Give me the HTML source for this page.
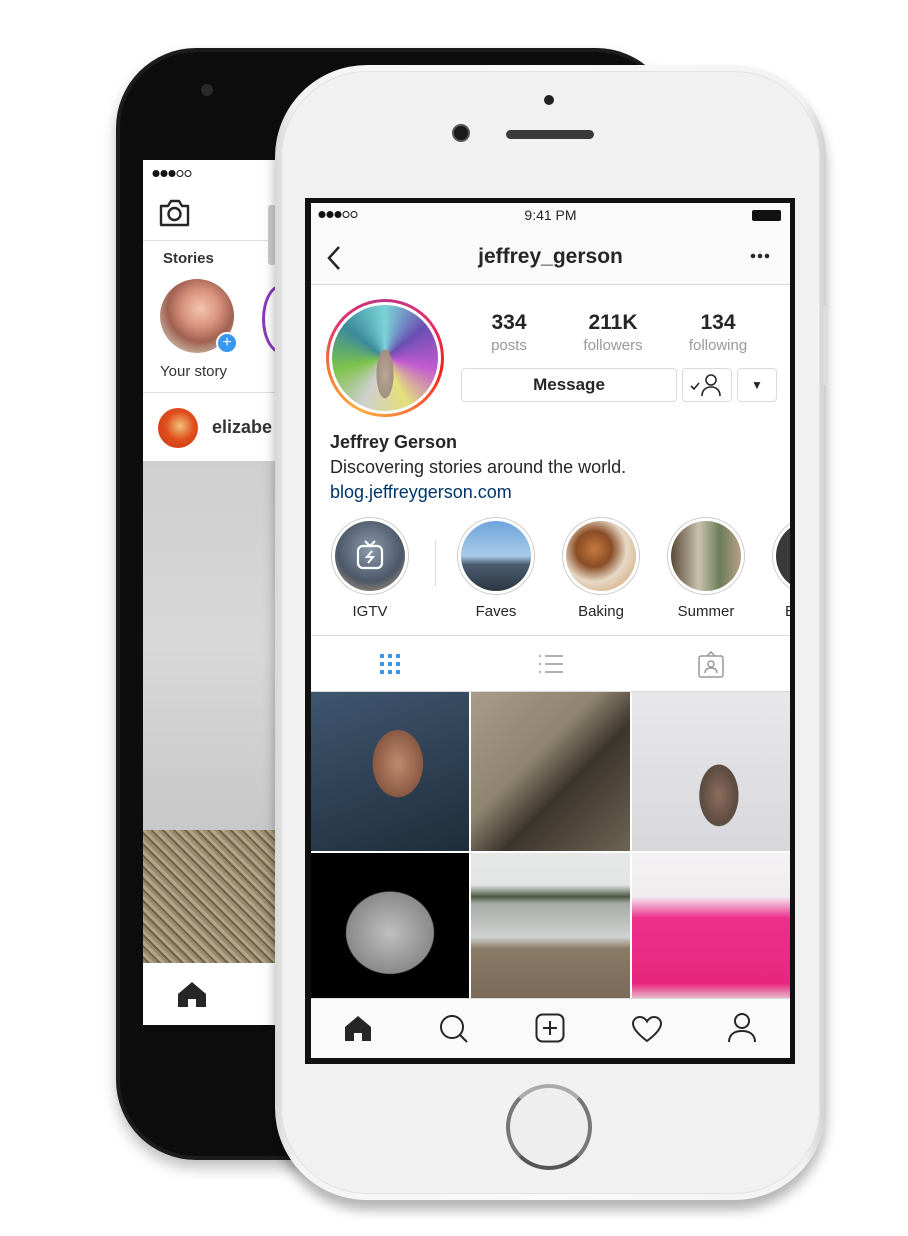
<!DOCTYPE html>
<html><head><meta charset="utf-8"><style>
*{margin:0;padding:0;box-sizing:border-box}
body{width:908px;height:1236px;background:#fff;position:relative;overflow:hidden;font-family:"Liberation Sans",Arial,sans-serif;color:#262626}
.a{position:absolute}
.t{position:absolute;white-space:nowrap}
</style></head><body>
<!-- back phone -->
<div class="a" style="left:116px;top:48px;width:560px;height:1112px;background:#1c1c1c;border-radius:80px;box-shadow:0 8px 14px rgba(0,0,0,.25)"></div>
<div class="a" style="left:120px;top:52px;width:552px;height:1104px;background:#0d0d0d;border-radius:76px"></div>
<div class="a" style="left:201px;top:84px;width:12px;height:12px;border-radius:50%;background:#2a2a2a"></div>
<div class="a" style="left:143px;top:160px;width:140px;height:865px;background:#fff"></div>
<svg class="a" style="left:152px;top:169px" width="46" height="9"><circle cx="4" cy="4.5" r="3.5" fill="#111"/><circle cx="12" cy="4.5" r="3.5" fill="#111"/><circle cx="20" cy="4.5" r="3.5" fill="#111"/><circle cx="28" cy="4.5" r="3" fill="none" stroke="#111"/><circle cx="36" cy="4.5" r="3" fill="none" stroke="#111"/></svg>
<svg class="a" style="left:158px;top:198px" width="33" height="30" viewBox="0 0 33 30"><path d="M3 8h7l3-5h8l3 5h6v19H3z" fill="none" stroke="#262626" stroke-width="2.4" stroke-linejoin="round"/><circle cx="16.5" cy="16" r="6" fill="none" stroke="#262626" stroke-width="2.4"/></svg>
<div class="a" style="left:143px;top:240px;width:140px;height:1px;background:#ddd"></div>
<div class="t" style="left:163px;top:250px;font-size:15px;font-weight:bold;color:#333">Stories</div>
<div class="a" style="left:160px;top:279px;width:74px;height:74px;border-radius:50%;background:radial-gradient(circle at 55% 40%,#f3c4b0 0,#d9947e 30%,#a06050 55%,#c9b8a6 80%)"></div>
<div class="a" style="left:216px;top:332px;width:22px;height:22px;border-radius:50%;background:#3897f0;border:2px solid #fff;color:#fff;font-size:16px;line-height:17px;text-align:center">+</div>
<div class="a" style="left:262px;top:284px;width:40px;height:70px;border-radius:50%;border:3px solid #8a3ab9"></div>
<div class="t" style="left:160px;top:363px;font-size:15px;color:#333">Your story</div>
<div class="a" style="left:143px;top:392px;width:140px;height:1px;background:#ddd"></div>
<div class="a" style="left:158px;top:408px;width:40px;height:40px;border-radius:50%;background:radial-gradient(circle at 55% 45%,#f1c27a 0,#e0501e 45%,#c7320f 100%)"></div>
<div class="t" style="left:212px;top:417px;font-size:18px;font-weight:bold;color:#333">elizabe</div>
<div class="a" style="left:143px;top:461px;width:140px;height:370px;background:linear-gradient(180deg,#cfcfcf,#d8d8d8 50%,#c8c8c8)"></div>
<div class="a" style="left:143px;top:830px;width:140px;height:133px;background:repeating-linear-gradient(45deg,#9a8b6e 0 3px,#6e624d 3px 5px,#b3a588 5px 8px)"></div>
<svg class="a" style="left:176px;top:980px" width="32" height="28" viewBox="0 0 32 28"><path d="M16 2L2 14v13h10v-8h8v8h10V14z" fill="#262626"/></svg>
<div class="a" style="left:268px;top:205px;width:8px;height:60px;background:#ccc;border-radius:3px"></div>
<!-- front phone -->
<div class="a" style="left:275px;top:65px;width:551px;height:1135px;border-radius:92px;background:linear-gradient(90deg,#d8d8d8,#f4f4f4 4%,#fafafa 50%,#f2f2f2 96%,#d0d0d0);box-shadow:0 10px 12px rgba(0,0,0,.3)"></div>
<div class="a" style="left:281px;top:71px;width:539px;height:1123px;border-radius:86px;background:#f1f1f1;border:1px solid #e2e2e2"></div>
<div class="a" style="left:544px;top:95px;width:10px;height:10px;border-radius:50%;background:#222"></div>
<div class="a" style="left:452px;top:124px;width:18px;height:18px;border-radius:50%;background:#1a1a1a;border:2px solid #555"></div>
<div class="a" style="left:506px;top:130px;width:88px;height:9px;border-radius:5px;background:#3a3a3a"></div>
<div class="a" style="left:506px;top:1084px;width:86px;height:86px;border-radius:50%;border:4px solid #777;border-top-color:#aaa;border-bottom-color:#555;background:#eee"></div>
<div class="a" style="left:305px;top:198px;width:490px;height:866px;background:#111"></div>
<div class="a" style="left:311px;top:203px;width:479px;height:855px;background:#fff;overflow:hidden">
 <div class="a" style="left:0;top:0;width:479px;height:82px;background:#fafafa;border-bottom:1px solid #dbdbdb"></div>
 <svg class="a" style="left:7px;top:7px" width="46" height="9"><circle cx="4" cy="4.5" r="3.5" fill="#111"/><circle cx="12" cy="4.5" r="3.5" fill="#111"/><circle cx="20" cy="4.5" r="3.5" fill="#111"/><circle cx="28" cy="4.5" r="3" fill="none" stroke="#111"/><circle cx="36" cy="4.5" r="3" fill="none" stroke="#111"/></svg>
 <div class="t" style="left:0;width:479px;text-align:center;top:4px;font-size:14px">9:41 PM</div>
 <div class="a" style="left:441px;top:7px;width:29px;height:11px;background:#111;border-radius:2px"></div>
 <svg class="a" style="left:15px;top:42px" width="18" height="26"><path d="M13 2L3 13l10 11" fill="none" stroke="#262626" stroke-width="2.5"/></svg>
 <div class="t" style="left:0;width:479px;text-align:center;top:42px;font-size:21px;font-weight:bold">jeffrey_gerson</div>
 <svg class="a" style="left:439px;top:50px" width="20" height="6"><circle cx="3" cy="3" r="2.3" fill="#262626"/><circle cx="10" cy="3" r="2.3" fill="#262626"/><circle cx="17" cy="3" r="2.3" fill="#262626"/></svg>
 <div class="a" style="left:15px;top:96px;width:118px;height:118px;border-radius:50%;background:conic-gradient(#c13584,#e1306c,#fd1d1d,#f77737,#fcaf45,#f77737,#e1306c,#c13584)"></div>
 <div class="a" style="left:18px;top:99px;width:112px;height:112px;border-radius:50%;background:#fff"></div>
 <div class="a" style="left:21px;top:102px;width:106px;height:106px;border-radius:50%;background:radial-gradient(ellipse 14px 40px at 50% 65%,#b8a596 0,#a38f80 60%,transparent 62%),conic-gradient(#7ad4d6,#6a4fb3,#c25bd0,#e4e07a,#cfcfcf,#7dc24a,#3c8a9c,#7ad4d6)"></div>
 <div class="t" style="left:148px;width:100px;text-align:center;top:108px;font-size:21px;font-weight:bold">334</div>
 <div class="t" style="left:148px;width:100px;text-align:center;top:134px;font-size:15px;color:#999">posts</div>
 <div class="t" style="left:252px;width:100px;text-align:center;top:108px;font-size:21px;font-weight:bold">211K</div>
 <div class="t" style="left:252px;width:100px;text-align:center;top:134px;font-size:15px;color:#999">followers</div>
 <div class="t" style="left:357px;width:100px;text-align:center;top:108px;font-size:21px;font-weight:bold">134</div>
 <div class="t" style="left:357px;width:100px;text-align:center;top:134px;font-size:15px;color:#999">following</div>
 <div class="a" style="left:150px;top:165px;width:216px;height:34px;border:1px solid #dbdbdb;border-radius:4px;text-align:center;font-size:17px;line-height:32px;font-weight:bold;color:#262626">Message</div>
 <div class="a" style="left:371px;top:165px;width:50px;height:34px;border:1px solid #dbdbdb;border-radius:4px"></div>
 <svg class="a" style="left:378px;top:169px" width="36" height="26"><path d="M2 14l3 3 5-6" fill="none" stroke="#262626" stroke-width="1.6"/><circle cx="22" cy="8" r="5" fill="none" stroke="#262626" stroke-width="1.6"/><path d="M13 24c0-6 4-9 9-9s9 3 9 9" fill="none" stroke="#262626" stroke-width="1.6"/></svg>
 <div class="a" style="left:426px;top:165px;width:40px;height:34px;border:1px solid #dbdbdb;border-radius:4px;text-align:center;font-size:12px;line-height:32px">▼</div>
 <div class="t" style="left:19px;top:229px;font-size:18px;font-weight:bold">Jeffrey Gerson</div>
 <div class="t" style="left:19px;top:254px;font-size:18px">Discovering stories around the world.</div>
 <div class="t" style="left:19px;top:279px;font-size:18px;color:#003569">blog.jeffreygerson.com</div>
 <!-- highlights -->
 <div class="a" style="left:20px;top:314px;width:78px;height:78px;border-radius:50%;border:1px solid #ccc"></div>
 <div class="a" style="left:24px;top:318px;width:70px;height:70px;border-radius:50%;background:radial-gradient(circle at 50% 40%,#8a9aac,#4c5868 60%,#c9a880 100%)"></div>
 <svg class="a" style="left:44px;top:336px" width="30" height="32"><path d="M10 2l5 5 5-5" fill="none" stroke="#fff" stroke-width="2"/><rect x="3" y="7" width="24" height="22" rx="5" fill="none" stroke="#fff" stroke-width="2.2"/><path d="M17 12l-5 6h6l-5 6" fill="none" stroke="#fff" stroke-width="2"/></svg>
 <div class="a" style="left:124px;top:338px;width:1px;height:45px;background:#dbdbdb"></div>
 <div class="a" style="left:146px;top:314px;width:78px;height:78px;border-radius:50%;border:1px solid #ccc"></div>
 <div class="a" style="left:150px;top:318px;width:70px;height:70px;border-radius:50%;background:linear-gradient(180deg,#6fa4dc 0,#a7cbe8 50%,#4c5c70 62%,#2a3642 100%)"></div>
 <div class="a" style="left:251px;top:314px;width:78px;height:78px;border-radius:50%;border:1px solid #ccc"></div>
 <div class="a" style="left:255px;top:318px;width:70px;height:70px;border-radius:50%;background:radial-gradient(circle at 40% 40%,#c47a3e 0,#8a4d25 30%,#e7d9c6 55%,#d7b58e 80%)"></div>
 <div class="a" style="left:356px;top:314px;width:78px;height:78px;border-radius:50%;border:1px solid #ccc"></div>
 <div class="a" style="left:360px;top:318px;width:70px;height:70px;border-radius:50%;background:linear-gradient(90deg,#5a4a3a,#c9c0ae 40%,#6b7e5a 70%,#b89e88)"></div>
 <div class="a" style="left:461px;top:314px;width:78px;height:78px;border-radius:50%;border:1px solid #ccc"></div>
 <div class="a" style="left:465px;top:318px;width:70px;height:70px;border-radius:50%;background:#3a3a3a"></div>
 <div class="t" style="left:19px;width:80px;text-align:center;top:400px;font-size:15px">IGTV</div>
 <div class="t" style="left:145px;width:80px;text-align:center;top:400px;font-size:15px">Faves</div>
 <div class="t" style="left:250px;width:80px;text-align:center;top:400px;font-size:15px">Baking</div>
 <div class="t" style="left:355px;width:80px;text-align:center;top:400px;font-size:15px">Summer</div>
 <div class="t" style="left:474px;top:400px;font-size:15px">B</div>
 <div class="a" style="left:0;top:432px;width:479px;height:1px;background:#dbdbdb"></div>
 <svg class="a" style="left:68px;top:450px" width="24" height="24" fill="#3897f0"><rect x="1" y="1" width="4" height="4"/><rect x="9" y="1" width="4" height="4"/><rect x="17" y="1" width="4" height="4"/><rect x="1" y="9" width="4" height="4"/><rect x="9" y="9" width="4" height="4"/><rect x="17" y="9" width="4" height="4"/><rect x="1" y="17" width="4" height="4"/><rect x="9" y="17" width="4" height="4"/><rect x="17" y="17" width="4" height="4"/></svg>
 <svg class="a" style="left:226px;top:450px" width="28" height="24" stroke="#999" stroke-width="1.5"><path d="M2 3h2M8 3h18M2 11h2M8 11h18M2 19h2M8 19h18"/></svg>
 <svg class="a" style="left:386px;top:448px" width="28" height="28" fill="none" stroke="#999" stroke-width="1.5"><rect x="2" y="5" width="24" height="21" rx="2"/><path d="M10 5l4-4 4 4"/><circle cx="14" cy="13" r="3"/><path d="M8 22c0-4 3-5 6-5s6 1 6 5"/></svg>
 <div class="a" style="left:0;top:488px;width:479px;height:1px;background:#dbdbdb"></div>
 <!-- grid -->
 <div class="a" style="left:0;top:489px;width:158px;height:159px;background:radial-gradient(ellipse 45px 60px at 55% 45%,#c08a6c 0,#8b5a44 55%,transparent 57%),linear-gradient(160deg,#3f5670,#1f2d3a)"></div>
 <div class="a" style="left:160px;top:489px;width:159px;height:159px;background:linear-gradient(135deg,#a89c88 0,#8f8470 40%,#3c352c 60%,#6e6454 100%)"></div>
 <div class="a" style="left:321px;top:489px;width:158px;height:159px;background:radial-gradient(ellipse 35px 55px at 55% 65%,#8c6e5e 0,#5a4a40 55%,transparent 57%),linear-gradient(180deg,#e8e8ea,#d8d8dc)"></div>
 <div class="a" style="left:0;top:650px;width:158px;height:145px;background:radial-gradient(ellipse 62px 58px at 50% 55%,#bfbfbf 0,#8a8a8a 70%,transparent 72%),#000"></div>
 <div class="a" style="left:160px;top:650px;width:159px;height:145px;background:linear-gradient(180deg,#e6e8e8 0,#e3e5e5 22%,#4a5a42 30%,#a8aca8 35%,#cfd2d0 58%,#8a7a66 66%,#7a6a58 100%)"></div>
 <div class="a" style="left:321px;top:650px;width:158px;height:145px;background:linear-gradient(180deg,#f4f2f4 0,#f0ecee 30%,#ee2f8c 45%,#e8267f 90%,#e6b8c8 100%)"></div>
 <!-- bottom nav -->
 <div class="a" style="left:0;top:795px;width:479px;height:60px;background:#fafafa;border-top:1px solid #dbdbdb"></div>
 <svg class="a" style="left:32px;top:811px" width="30" height="28"><path d="M15 2L2 13v14h9v-8h8v8h9V13z" fill="#262626"/></svg>
 <svg class="a" style="left:128px;top:811px" width="30" height="30" fill="none" stroke="#262626" stroke-width="2"><circle cx="13" cy="13" r="11"/><path d="M21 21l7 7"/></svg>
 <svg class="a" style="left:224px;top:810px" width="30" height="30" fill="none" stroke="#262626" stroke-width="2"><rect x="1.5" y="1.5" width="27" height="27" rx="6"/><path d="M15 8v14M8 15h14"/></svg>
 <svg class="a" style="left:320px;top:812px" width="32" height="28" fill="none" stroke="#262626" stroke-width="2"><path d="M16 26C4 17 2 12 2 8.5 2 5 5 2 9 2c3 0 5.5 2 7 4.5C17.5 4 20 2 23 2c4 0 7 3 7 6.5C30 12 28 17 16 26z"/></svg>
 <svg class="a" style="left:416px;top:809px" width="30" height="32" fill="none" stroke="#262626" stroke-width="2"><circle cx="15" cy="9" r="7"/><path d="M2 30c0-8 6-11 13-11s13 3 13 11"/></svg>
</div>
<div class="a" style="left:823px;top:305px;width:5px;height:80px;background:#ddd;border-radius:2px"></div>
</body></html>
